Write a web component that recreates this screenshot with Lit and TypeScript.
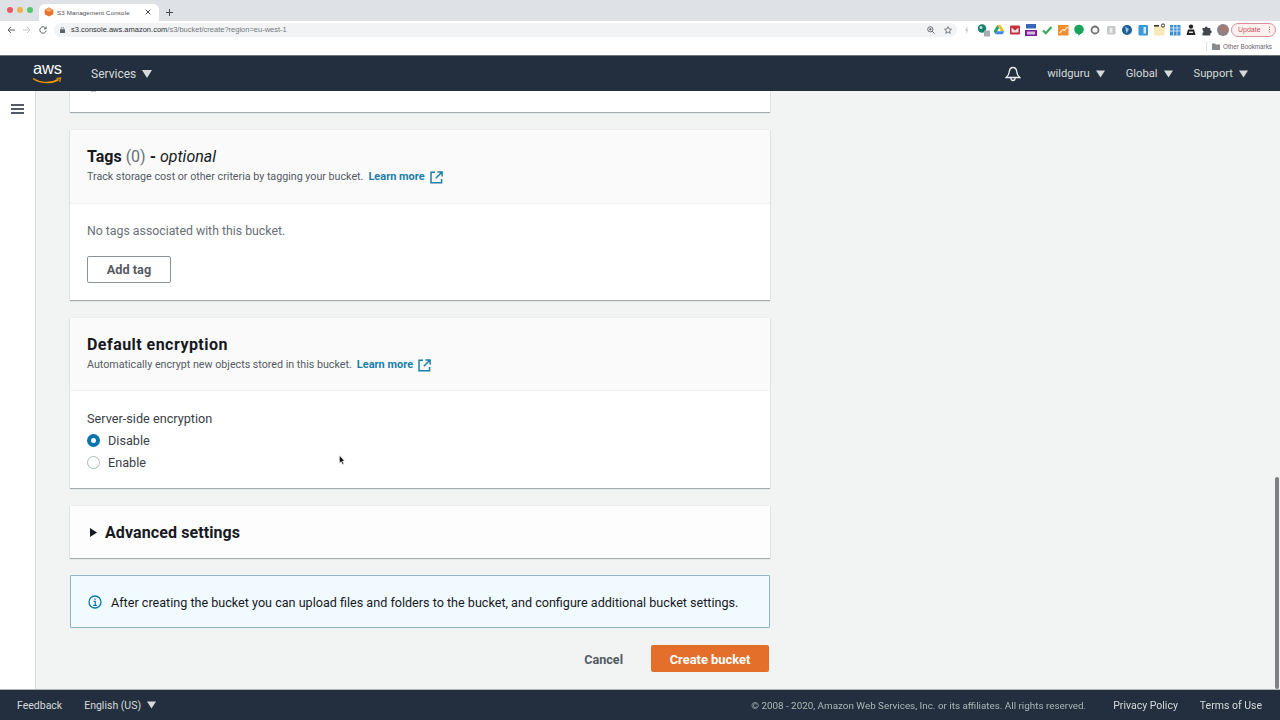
import { LitElement, html, css, svg } from "lit";
import { customElement } from "lit/decorators.js";

const tri = html`<svg class="tri" viewBox="0 0 10 8"><path d="M0 0h10L5 8z" fill="currentColor"/></svg>`;
const ext = html`<svg class="ext" viewBox="0 0 13 13" fill="none" stroke="#1b7ea8" stroke-width="1.5"><path d="M5 1.2H1v10.6h10.6V8"/><path d="M7.4.9h4.7v4.7M12 1 5.8 7.2"/></svg>`;

const extIcons = [
  svg`<path d="M8.5 4 6 8.5h1.6L7 12l2.6-4.6H8z" fill="#c4c7ca"/>`,
  svg`<circle cx="7" cy="6.5" r="4.2" fill="#14806f"/><circle cx="6" cy="5.5" r="1.5" fill="#bfe3dc"/><rect x="9" y="8.5" width="6" height="6" fill="#a9acae"/>`,
  svg`<path d="M6.3 3h3.4l3.6 6.2h-3.5z" fill="#f4bb2b"/><path d="M6.3 3 2.7 9.2l1.8 3.1 3.6-6.2z" fill="#1fa463"/><path d="M4.5 12.3h7.2l1.6-3.1H6.2z" fill="#4385f4"/>`,
  svg`<rect x="3" y="3.5" width="10" height="9" rx="1" fill="#c5303c"/><path d="M4.5 5.5 8 8.5l3.5-3v5h-7z" fill="#e7e2e6"/>`,
  svg`<rect x="3" y="2" width="10" height="4.5" fill="#3866b8"/><rect x="2" y="8" width="12" height="6" fill="#7b1f94"/><rect x="4" y="9.5" width="8" height="3" fill="#d9b7e3"/>`,
  svg`<path d="M4 8.5 6.8 11.2 12.5 5" fill="none" stroke="#3aa657" stroke-width="2.2"/>`,
  svg`<rect x="3" y="3" width="10.5" height="10.5" fill="#ee8e32"/><path d="M4.5 11 8 7.5l1.5 1L12.5 5" fill="none" stroke="#f8e2c8" stroke-width="1.3"/>`,
  svg`<circle cx="8" cy="7.5" r="4.8" fill="#18a45b"/><path d="M7 11h3l-2.500 3z" fill="#18a45b"/>`,
  svg`<circle cx="8" cy="8" r="3.5" fill="none" stroke="#6d7073" stroke-width="1.8"/>`,
  svg`<rect x="4" y="4" width="8.5" height="8.5" rx="1.5" fill="#c6c8ca"/><rect x="6.5" y="5.8" width="3" height="5" fill="#eceded"/>`,
  svg`<circle cx="8" cy="8" r="5" fill="#1c5e94"/><path d="M6 4.5 10 7 7.5 11.5z" fill="#9cc7e6"/>`,
  svg`<rect x="3.5" y="3" width="9.5" height="10.5" rx="1" fill="#3a98d6"/><rect x="8.5" y="5" width="2.5" height="6.5" fill="#cfe7f6"/>`,
  svg`<rect x="3" y="4.5" width="10.5" height="9" fill="#f7e9b5"/><rect x="3" y="3" width="5" height="1.6" fill="#333"/><circle cx="12" cy="3.5" r="1.6" fill="none" stroke="#333"/>`,
  svg`<rect x="3" y="3" width="10.5" height="10.5" fill="#3d8fd0"/><path d="M3 6h10.5M3 9h10.5M6.5 3v10.5M10 3v10.5" stroke="#d8eaf7" stroke-width=".9"/>`,
  svg`<circle cx="8" cy="4.6" r="2.2" fill="#232323"/><path d="M3.5 13 5 7.5h6l1.5 5.5z" fill="#232323"/><rect x="6" y="9.5" width="4" height="1.5" fill="#ddd"/>`,
  svg`<path d="M3.5 6h2.2a1.5 1.5 0 0 1 3 0h2.6v2.3a1.5 1.5 0 0 1 0 3v2.2H3.5v-2.4a1.5 1.5 0 0 0 0-2.8z" fill="#44474a"/>`,
];

@customElement("app-root")
export class AppRoot extends LitElement {
  static styles = css`
    :host { display: block; width: 1280px; height: 720px; overflow: hidden; position: relative;
      font-family: Roboto, "Noto Sans", sans-serif; color: #16191f; filter: blur(0.35px); }
    * { box-sizing: border-box; }
    .page { display: flex; flex-direction: column; height: 720px; }

    .tabstrip { height: 21px; background: #dee1e6; display: flex; align-items: flex-end; flex: none; }
    .lights { display: flex; gap: 3.5px; padding: 0 0 8px 6.5px; width: 39px; }
    .lights i { width: 6.5px; height: 6.5px; border-radius: 50%; flex: none; }
    .tab { width: 120px; height: 17px; background: #fff; border-radius: 6px 6px 0 0; display: flex; align-items: center;
      padding: 0 5px 1px 5px; font: 6.2px "Liberation Sans", sans-serif; color: #4a4d51; }
    .tab svg { width: 10px; height: 10px; margin-right: 3px; flex: none; }
    .tab .title { flex: 1; letter-spacing: .14px; }
    .tab .close { width: 6px; height: 6px; }
    .plus { width: 7px; height: 7px; margin: 0 0 5px 7px; }

    .toolbar { height: 17px; background: #fff; display: flex; align-items: center; flex: none; }
    .navicons { display: flex; gap: 8px; padding-left: 7px; width: 54px; }
    .navicons svg { width: 8px; height: 8px; }
    .omni { width: 903px; height: 14px; border-radius: 7px; background: #f1f3f4; display: flex; align-items: center;
      padding: 0 5px 0 6px; font: 7.5px "Liberation Sans", sans-serif; color: #75787c; }
    .omni .lock { width: 5px; height: 6px; margin-right: 6px; flex: none; }
    .omni b { font-weight: 400; color: #303236; }
    .omni .url { flex: 1; }
    .omni svg.m { width: 8px; height: 8px; margin-left: 9px; }
    .exts { display: flex; padding-left: 2px; }
    .exts svg { width: 16px; height: 16px; display: block; }
    .avatar { width: 12px; height: 12px; border-radius: 50%; background: radial-gradient(circle at 60% 40%, #b0786c, #7d8590 75%); margin: 0 2px 0 2px; flex: none; }
    .update { width: 45px; height: 14px; border: 1px solid #d7919a; border-radius: 7px; background: #fdf1f0; color: #c5525a;
      font: 7px "Liberation Sans", sans-serif; display: flex; align-items: center; padding-left: 6px; justify-content: space-between; padding-right: 5px; flex: none; }
    .update i { width: 1.4px; height: 1.4px; background: #c5525a; box-shadow: 0 -2.4px #c5525a, 0 2.4px #c5525a; }

    .bookmarks { height: 17px; background: #fff; display: flex; align-items: center; justify-content: flex-end; flex: none;
      font: 6.3px "Liberation Sans", sans-serif; color: #5f6368; padding-right: 8px; }
    .bookmarks .sep { width: 1px; height: 9px; background: #dadce0; margin-right: 5px; }
    .bookmarks svg { width: 8px; height: 7px; margin-right: 3px; }

    .nav { height: 36px; background: #232f3e; color: #d5dbdb; display: flex; align-items: center; flex: none; font-size: 12px; border-top: 1px solid #6f7479; }
    .logo { margin-left: 32px; width: 30px; height: 22px; position: relative; color: #fff; font: 400 16.5px/15px "Liberation Sans", sans-serif; letter-spacing: -.2px; }
    .logo span { display: block; margin-top: -2px; padding-left: 1px; }
    .logo svg { position: absolute; left: 0; top: 14px; width: 30px; height: 8px; }
    .nav .item { display: flex; align-items: center; }
    .tri { width: 10px; height: 8px; margin-left: 6px; flex: none; }
    .services { margin-left: 29px; font-size: 12px; }
    .right { margin-left: auto; display: flex; align-items: center; padding-right: 32px; font-size: 11.2px; }
    .right .tri { width: 9px; }
    .bell { width: 16px; height: 16px; margin-right: 26px; }
    .right .item { margin-right: 21px; }
    .right .item:last-child { margin-right: 0; }

    .main { flex: 1; display: flex; min-height: 0; background: #f2f3f3; position: relative; }
    .side { width: 36px; background: #fff; border-right: 1px solid #d5dbdb; flex: none; padding: 13px 0 0 11px; }
    .side i { display: block; width: 13px; height: 2px; background: #545b64; margin-bottom: 2px; }
    .content { padding-left: 34px; width: 734px; display: flex; flex-direction: column; }

    .card { background: #fff; width: 700px; box-shadow: 0 1px 1px 0 rgba(0,28,36,.3), 0 0 1px 0 rgba(0,28,36,.12); flex: none; }
    .stub { height: 21px; margin-bottom: 18px; position: relative; }
    .stub i { position: absolute; left: 21px; top: 0; width: 5px; height: 1px; background: #c5c8ca; }
    .head { background: #fafafa; border-bottom: 1px solid #f0f1f1; padding: 18px 17px 0; }
    .h-a { height: 74px; }
    .h-b { height: 73px; }
    h2 { margin: 0; font-size: 16px; line-height: 18px; font-weight: 700; color: #16191f; }
    h2.wide { letter-spacing: .46px; }
    h2 .n { font-weight: 400; color: #687078; }
    h2 em { font-weight: 400; }
    .sub { font-size: 10.7px; line-height: 14px; margin-top: 4px; color: #545b64; display: flex; align-items: center; white-space: pre; }
    .learn { color: #1b7ea8; font-weight: 700; margin-left: 5px; font-size: 11px; }
    .ext { width: 13px; height: 13px; margin-left: 5px; }
    .body { padding: 0 17px; font-size: 12.7px; }
    .c2 { margin-bottom: 18px; height: 170px; }
    .c3 { margin-bottom: 18px; height: 170px; }
    .empty { color: #687078; padding-top: 19px; line-height: 16px; font-size: 12.3px; }
    .btn { margin-top: 17px; width: 84px; height: 27px; background: #fff; border: 1px solid #8c9396; border-radius: 2px; color: #545b64;
      font: 700 12.7px Roboto, sans-serif; display: flex; align-items: center; justify-content: center; padding: 0; }
    .field { padding-top: 20px; line-height: 16px; color: #3a4047; }
    .radio { display: flex; align-items: center; gap: 8px; height: 22px; color: #3a4047; }
    .field + .radio { margin-top: 2px; }
    .radio i { width: 13px; height: 13px; border-radius: 50%; border: 1px solid #aab7b8; background: #fff; flex: none; }
    .radio i.on { border: 4px solid #0a75ad; }

    .adv { height: 52px; margin-bottom: 17px; background: #fdfdfd; display: flex; align-items: center; padding: 0 0 0 20px; font-size: 16px; font-weight: 700; letter-spacing: .1px; }
    .adv svg { width: 7px; height: 9px; margin-right: 8px; }

    .flash { width: 700px; height: 53px; background: #f1faff; border: 1px solid #8fb6c2; border-radius: 1px; display: flex; align-items: center;
      padding: 1px 0 0 17px; font-size: 12.6px; color: #16191f; flex: none; }
    .flash svg { width: 14px; height: 14px; margin: -1px 9px 0 0; flex: none; }

    .actions { display: flex; align-items: center; justify-content: flex-end; width: 699px; margin-top: 17px; flex: none; }
    .cancel { font-size: 12.6px; font-weight: 700; color: #545b64; margin-right: 28px; padding-top: 1px; }
    .primary { width: 118px; height: 27px; background: #e36f2a; color: #fff; border-radius: 2px; font-size: 12.9px; font-weight: 700; padding-top: 1px;
      display: flex; align-items: center; justify-content: center; }

    .thumb { position: absolute; right: 1px; bottom: 0; width: 4px; height: 212px; background: #7d7f80; border-radius: 2px; }
    .cursor { position: absolute; left: 339px; top: 364px; width: 6px; height: 10px; }

    .foot { height: 31px; background: #232f3e; color: #d5dbdb; display: flex; align-items: center; flex: none; font-size: 10.5px; padding: 0 18px 0 17px; border-top: 1px solid #aab3b7; }
    .foot .lang { display: flex; align-items: center; margin-left: 22px; }
    .foot .lang .tri { width: 9px; }
    .foot .copy { margin-left: auto; color: #aab7b8; font-size: 9.85px; margin-right: 27px; }
    .foot .terms { margin-left: 22px; }
  `;

  render() {
    return html`<div class="page">
      <div class="tabstrip">
        <div class="lights"><i style="background:#ea5a63"></i><i style="background:#ecb34c"></i><i style="background:#55c46d"></i></div>
        <div class="tab">
          <svg viewBox="0 0 10 10"><path d="M5 .5 9.3 2.7v4.6L5 9.5.7 7.3V2.7z" fill="#e8722c"/><path d="M5 .5 9.3 2.7 5 5 .7 2.7z" fill="#f3a566"/></svg>
          <span class="title">S3 Management Console</span>
          <svg class="close" viewBox="0 0 6 6"><path d="M.7.7l4.6 4.6M5.3.7.7 5.3" stroke="#45484c" stroke-width="1"/></svg>
        </div>
        <svg class="plus" viewBox="0 0 7 7"><path d="M3.5 0v7M0 3.5h7" stroke="#45484c" stroke-width="1"/></svg>
      </div>
      <div class="toolbar">
        <div class="navicons">
          <svg viewBox="0 0 8 8" fill="none" stroke="#5f6368" stroke-width="1"><path d="M8 4H1M4 1 1 4l3 3"/></svg>
          <svg viewBox="0 0 8 8" fill="none" stroke="#c2c5c8" stroke-width="1"><path d="M0 4h7M4 1l3 3-3 3"/></svg>
          <svg viewBox="0 0 8 8" fill="none" stroke="#5f6368" stroke-width="1"><path d="M6.7 2.2A3.2 3.2 0 1 0 7.2 4.5"/><path d="M7.2.6v2.2H5" /></svg>
        </div>
        <div class="omni">
          <svg class="lock" viewBox="0 0 5 6"><rect y="2.3" width="5" height="3.7" rx=".5" fill="#5f6368"/><path d="M1.2 2.5V1.6a1.3 1.3 0 0 1 2.6 0v.9" fill="none" stroke="#5f6368" stroke-width=".7"/></svg>
          <span class="url"><b>s3.console.aws.amazon.com</b>/s3/bucket/create?region=eu-west-1</span>
          <svg class="m" viewBox="0 0 8 8" fill="none" stroke="#5f6368" stroke-width=".9"><circle cx="3.3" cy="3.3" r="2.6"/><path d="M5.2 5.2 7.6 7.6M2 3.3h2.6M3.3 2v2.6"/></svg>
          <svg class="m" viewBox="0 0 8 8" fill="none" stroke="#5f6368" stroke-width=".8"><path d="M4 .7 5 3l2.5.2L5.6 4.9l.6 2.4L4 6 1.8 7.3l.6-2.4L.5 3.2 3 3z"/></svg>
        </div>
        <div class="exts">${extIcons.map((i) => html`<svg viewBox="0 0 16 16">${i}</svg>`)}</div>
        <div class="avatar"></div>
        <div class="update"><span>Update</span><i></i></div>
      </div>
      <div class="bookmarks">
        <div class="sep"></div>
        <svg viewBox="0 0 8 7"><path d="M0 .5h3l1 1h4V7H0z" fill="#8a8d90"/></svg>
        <span>Other Bookmarks</span>
      </div>

      <div class="nav">
        <div class="logo"><span>aws</span>
          <svg viewBox="0 0 30 8" fill="none"><path d="M1 1.5C8 6.5 19 7 26.5 2.5" stroke="#f79400" stroke-width="1.5"/><path d="M24.5 1.5l4-.6-.8 4" stroke="#f79400" stroke-width="1.2"/></svg>
        </div>
        <div class="item services">Services${tri}</div>
        <div class="right">
          <svg class="bell" viewBox="0 0 16 16" fill="none" stroke="#eaeded" stroke-width="1.3"><path d="M8 1.5c-2.8 0-3.6 2.5-3.8 4.5-.2 2.4-1.4 4-3 5.5h13.6c-1.6-1.5-2.8-3.1-3-5.5C11.6 4 10.8 1.5 8 1.5z"/><path d="M5.8 11.5c0 1.8 1 3 2.2 3s2.2-1.2 2.2-3"/></svg>
          <div class="item">wildguru${tri}</div>
          <div class="item">Global${tri}</div>
          <div class="item">Support${tri}</div>
        </div>
      </div>

      <div class="main">
        <div class="side"><i></i><i></i><i></i></div>
        <div class="content">
          <div class="card stub"><i></i></div>
          <section class="card c2">
            <div class="head h-a">
              <h2>Tags <span class="n">(0)</span> - <em>optional</em></h2>
              <div class="sub">Track storage cost or other criteria by tagging your bucket.<span class="learn">Learn more</span>${ext}</div>
            </div>
            <div class="body">
              <div class="empty">No tags associated with this bucket.</div>
              <button class="btn">Add tag</button>
            </div>
          </section>
          <section class="card c3">
            <div class="head h-b">
              <h2 class="wide">Default encryption</h2>
              <div class="sub">Automatically encrypt new objects stored in this bucket.<span class="learn">Learn more</span>${ext}</div>
            </div>
            <div class="body">
              <div class="field">Server-side encryption</div>
              <div class="radio"><i class="on"></i>Disable</div>
              <div class="radio"><i></i>Enable</div>
            </div>
          </section>
          <section class="card adv">
            <svg viewBox="0 0 7 9"><path d="M0 0l7 4.5L0 9z" fill="#16191f"/></svg>Advanced settings
          </section>
          <div class="flash">
            <svg viewBox="0 0 14 14" fill="none" stroke="#0a75ad" stroke-width="1.3"><circle cx="7" cy="7" r="6"/><path d="M5.5 6.3H7.2v3.9M5.3 10.3h3.6" stroke-width="1.2"/><path d="M7 3.4v1.4" stroke-width="1.5"/></svg>
            After creating the bucket you can upload files and folders to the bucket, and configure additional bucket settings.
          </div>
          <div class="actions">
            <span class="cancel">Cancel</span>
            <div class="primary">Create bucket</div>
          </div>
        </div>
        <div class="thumb"></div>
        <svg class="cursor" viewBox="0 0 6 10"><path d="M.5.5v7.5l1.8-1.6 1.200 3 1.200-.5-1.200-2.900H5.500z" fill="#111" stroke="#fff" stroke-width=".4"/></svg>
      </div>

      <div class="foot">
        <span>Feedback</span>
        <span class="lang">English (US)${tri}</span>
        <span class="copy">© 2008 - 2020, Amazon Web Services, Inc. or its affiliates. All rights reserved.</span>
        <span>Privacy Policy</span>
        <span class="terms">Terms of Use</span>
      </div>
    </div>`;
  }
}
